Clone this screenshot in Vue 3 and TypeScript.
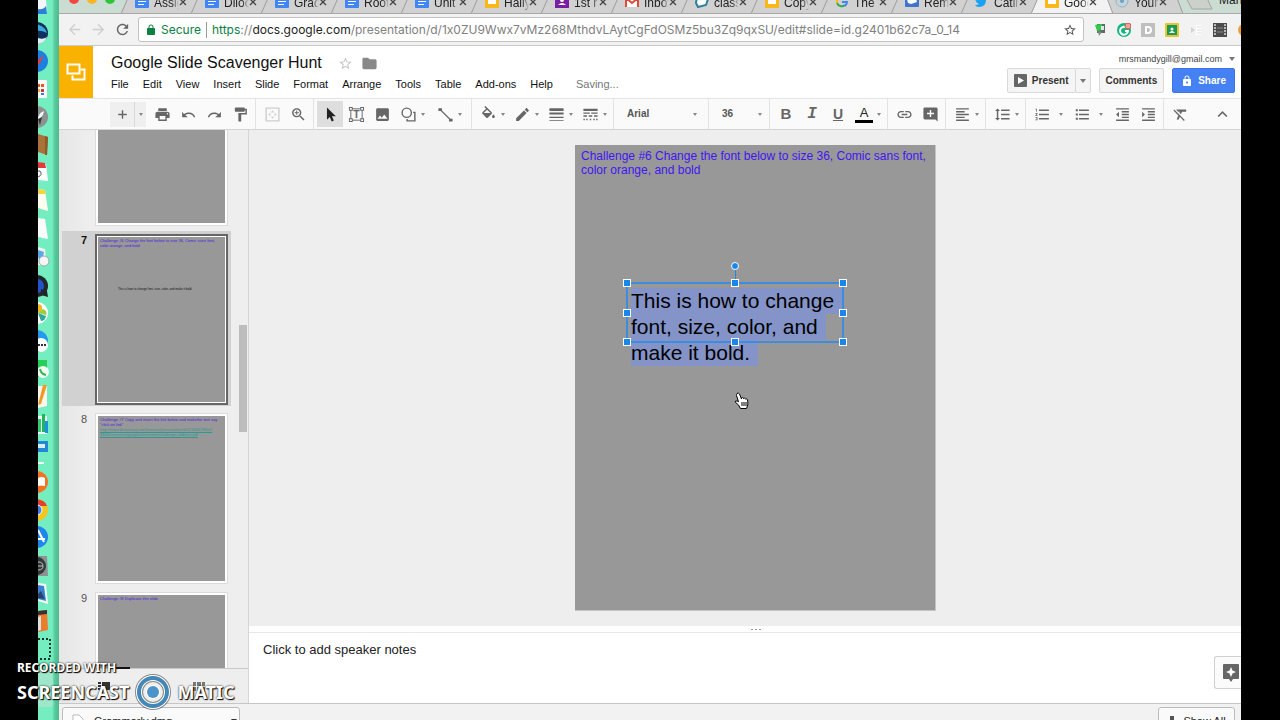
<script setup lang="ts">
import { ref } from 'vue'

type Favicon = 'docs' | 'slides' | 'people' | 'gmail' | 'class' | 'google' | 'remind' | 'twitter' | 'ring'

interface Tab {
  label: string
  icon: Favicon
  active?: boolean
}

interface Tool {
  kind: 'icon' | 'menu' | 'sep' | 'glyph'
  name?: string
  label?: string
  size?: string
}

interface Thumb {
  id: number
  title: string
  body?: string
  link?: string
}

const paths: Record<string, string> = {
  back: 'M20 11H7.83l5.59-5.59L12 4l-8 8 8 8 1.41-1.41L7.83 13H20v-2z',
  forward: 'M12 4l-1.41 1.41L16.17 11H4v2h12.17l-5.58 5.59L12 20l8-8z',
  reload: 'M17.65 6.35C16.2 4.9 14.21 4 12 4c-4.42 0-7.99 3.58-7.99 8s3.57 8 7.99 8c3.73 0 6.84-2.55 7.73-6h-2.08c-.82 2.33-3.04 4-5.65 4-3.31 0-6-2.69-6-6s2.69-6 6-6c1.66 0 3.14.69 4.22 1.78L13 11h7V4l-2.35 2.35z',
  lock: 'M18 8h-1V6c0-2.76-2.24-5-5-5S7 3.24 7 6v2H6c-1.1 0-2 .9-2 2v10c0 1.1.9 2 2 2h12c1.1 0 2-.9 2-2V10c0-1.1-.9-2-2-2zm-2.9 0H8.9V6c0-1.71 1.39-3.1 3.1-3.1 1.71 0 3.1 1.39 3.1 3.1v2z',
  shareLock: 'M18 8h-1V6c0-2.76-2.24-5-5-5S7 3.24 7 6v2H6c-1.1 0-2 .9-2 2v10c0 1.1.9 2 2 2h12c1.1 0 2-.9 2-2V10c0-1.1-.9-2-2-2zm-6 9c-1.1 0-2-.9-2-2s.9-2 2-2 2 .9 2 2-.9 2-2 2zm3.1-9H8.9V6c0-1.71 1.39-3.1 3.1-3.1 1.71 0 3.1 1.39 3.1 3.1v2z',
  star: 'M22 9.24l-7.19-.62L12 2 9.19 8.63 2 9.24l5.46 4.73L5.82 21 12 17.27 18.18 21l-1.63-7.03L22 9.24zM12 15.4l-3.76 2.27 1-4.28-3.32-2.88 4.38-.38L12 6.1l1.71 4.04 4.38.38-3.32 2.88 1 4.28L12 15.4z',
  folder: 'M10 4H4c-1.1 0-1.99.9-1.99 2L2 18c0 1.1.9 2 2 2h16c1.1 0 2-.9 2-2V8c0-1.1-.9-2-2-2h-8l-2-2z',
  plus: 'M18 13h-5v5h-2v-5H6v-2h5V6h2v5h5v2z',
  print: 'M19 8H5c-1.66 0-3 1.34-3 3v6h4v4h12v-4h4v-6c0-1.66-1.34-3-3-3zm-3 11H8v-5h8v5zm3-7c-.55 0-1-.45-1-1s.45-1 1-1 1 .45 1 1-.45 1-1 1zm-1-9H6v4h12V3z',
  undo: 'M12.5 9c-2.65 0-5.05.79-6.9 2.2L3 8v8h8l-3.620-3.200c1.390-.96 3.160-1.480 5.120-1.480 3.540 0 6.050 1.910 7.100 4.900l1.870-.58C20.380 11.630 17.150 9 12.500 9z',
  redo: 'M18.400 11.200C16.550 9.790 14.150 9 11.500 9c-4.650 0-7.880 2.630-8.960 6.640L4.400 16.220c1.050-2.990 3.560-4.900 7.100-4.900 1.950 0 3.730.52 5.120 1.480L13 16h8V8l-2.600 3.200z',
  paint: 'M18 4V3c0-.55-.45-1-1-1H5c-.55 0-1 .45-1 1v4c0 .55.45 1 1 1h12c.55 0 1-.45 1-1V6h1v4H9v11c0 .55.45 1 1 1h2c.55 0 1-.45 1-1v-9h8V4h-3z',
  fit: 'M2 2h20v20H2zM4 4v16h16V4zM12 6l2.500 3h-5zM12 18l2.500-3h-5zM6 12l3-2.500v5zM18 12l-3-2.500v5z',
  zoom: 'M15.5 14h-.79l-.28-.27C15.41 12.59 16 11.11 16 9.5 16 5.91 13.09 3 9.5 3S3 5.91 3 9.5 5.91 16 9.5 16c1.61 0 3.09-.59 4.23-1.57l.27.28v.79l5 4.99L20.49 19l-4.99-5zm-6 0C7.01 14 5 11.99 5 9.5S7.01 5 9.5 5 14 7.01 14 9.5 11.99 14 9.5 14zM12.500 10.200h-2.300v2.300H8.800v-2.300H6.500V8.800h2.300V6.500h1.400v2.300h2.300z',
  select: 'M7 2v17.500l4-3.900 2.700 6.200 3-1.300-2.700-6.100H19.500z',
  image: 'M21 19V5c0-1.1-.9-2-2-2H5c-1.1 0-2 .9-2 2v14c0 1.1.9 2 2 2h14c1.1 0 2-.9 2-2zM8.500 13.500l2.500 3.010L14.500 12l4.500 6H5l3.500-4.500z',
  shape: 'M9.500 2a7.500 7.500 0 1 0 0 15 7.500 7.500 0 0 0 0-15zm0 2a5.500 5.500 0 1 1 0 11 5.500 5.500 0 0 1 0-11zM18.500 8H22v14H9v-3.500h2V20h9V10h-1.500z',
  line: 'M2 3h5v3.200L18.800 18H22v4h-5v-3.200L5.200 7H2z',
  fill: 'M16.56 8.94L7.62 0 6.21 1.41l2.38 2.38-5.15 5.15c-.59.59-.59 1.54 0 2.12l5.5 5.5c.29.29.68.44 1.06.44s.77-.15 1.06-.44l5.5-5.5c.59-.58.59-1.53 0-2.12zM5.21 10L10 5.21 14.790 10H5.210zM19 11.500s-2 2.170-2 3.500c0 1.100.9 2 2 2s2-.9 2-2c0-1.330-2-3.500-2-3.500z',
  pencil: 'M3 17.25V21h3.75L17.81 9.94l-3.75-3.75L3 17.25zM20.71 7.04c.39-.39.39-1.02 0-1.41l-2.34-2.34c-.39-.39-1.02-.39-1.41 0l-1.83 1.83 3.75 3.75 1.83-1.83z',
  weight: 'M2 17h20v-2H2v2zm0 4h20v-1H2v1zm0-9h20V9H2v3zm0-9v4h20V3H2z',
  dash: 'M2 15h5v-2H2v2zm7.500 0h5v-2h-5v2zm7.500 0h5v-2h-5v2zM2 20h2v-2H2v2zm4 0h2v-2H6v2zm5 0h2v-2h-2v2zm5 0h2v-2h-2v2zm4 0h2v-2h-2v2zM2 11h9V9H2v2zm11 0h9V9h-9v2zM2 4v3h20V4H2z',
  link: 'M3.900 12c0-1.710 1.390-3.100 3.100-3.100h4V7H7c-2.760 0-5 2.240-5 5s2.240 5 5 5h4v-1.900H7c-1.710 0-3.100-1.390-3.100-3.100zM8 13h8v-2H8v2zm9-6h-4v1.900h4c1.710 0 3.100 1.390 3.100 3.100s-1.390 3.100-3.100 3.100h-4V17h4c2.760 0 5-2.240 5-5s-2.240-5-5-5z',
  comment: 'M22 4c0-1.100-.9-2-2-2H4c-1.100 0-2 .9-2 2v13c0 1.100.9 2 2 2h15l3 3V4zM17 11.500h-4v4h-2v-4H7v-2h4v-4h2v4h4z',
  align: 'M15 15H3v2h12v-2zm0-8H3v2h12V7zM3 13h18v-2H3v2zm0 8h18v-2H3v2zM3 3v2h18V3H3z',
  spacing: 'M6 7h2.500L5 3.500 1.500 7H4v10H1.500L5 20.500 8.500 17H6V7zm4-2v2h12V5H10zm0 14h12v-2H10v2zm0-6h12v-2H10v2z',
  numbered: 'M2 17h2v.5H3v1h1v.5H2v1h3v-4H2v1zm1-9h1V4H2v1h1v3zm-1 3h1.800L2 13.100v.9h3v-1H3.200L5 10.900V10H2v1zm5-6v2h14V5H7zm0 14h14v-2H7v2zm0-6h14v-2H7v2z',
  bullets: 'M2.500 4.500h3v3h-3zM2.500 10.500h3v3h-3zM2.500 16.500h3v3h-3zM7 19h14v-2H7v2zm0-6h14v-2H7v2zm0-8v2h14V5H7z',
  outdent: 'M11 17h10v-2H11v2zm-8-5l4 4V8l-4 4zm0 9h18v-2H3v2zM3 3v2h18V3H3zm8 6h10V7H11v2zm0 4h10v-2H11v2z',
  indent: 'M3 21h18v-2H3v2zM3 8v8l4-4-4-4zm8 9h10v-2H11v2zM3 3v2h18V3H3zm8 6h10V7H11v2zm0 4h10v-2H11v2z',
  clear: 'M3.270 5L2 6.270l6.970 6.970L6.500 19h3l1.570-3.660L16.730 21 18 19.730 3.550 5.270 3.270 5zM6 5v.18L8.820 8h2.400l-.72 1.680 2.100 2.100L14.210 8H20V5H6z',
  collapse: 'M12 7l-7 7 1.700 1.700L12 10.400l5.300 5.300L19 14z',
}

const tabs: Tab[] = [
  { label: 'Assig', icon: 'docs' },
  { label: 'Diloc', icon: 'docs' },
  { label: 'Grad', icon: 'docs' },
  { label: 'Root', icon: 'docs' },
  { label: 'Unit', icon: 'docs' },
  { label: 'Hally', icon: 'slides' },
  { label: '1st r', icon: 'people' },
  { label: 'Inbox', icon: 'gmail' },
  { label: 'class', icon: 'class' },
  { label: 'Copy', icon: 'slides' },
  { label: 'The l', icon: 'google' },
  { label: 'Remi', icon: 'remind' },
  { label: 'Catlin', icon: 'twitter' },
  { label: 'Goog', icon: 'slides', active: true },
  { label: 'Your', icon: 'ring' },
]

const menus = ['File', 'Edit', 'View', 'Insert', 'Slide', 'Format', 'Arrange', 'Tools', 'Table', 'Add-ons', 'Help']

const leadTools: Tool[] = [
  { kind: 'icon', name: 'print', label: 'Print' },
  { kind: 'icon', name: 'undo', label: 'Undo' },
  { kind: 'icon', name: 'redo', label: 'Redo' },
  { kind: 'icon', name: 'paint', label: 'Paint format' },
  { kind: 'sep' },
  { kind: 'icon', name: 'fit', label: 'Zoom to fit', size: 'faint' },
  { kind: 'icon', name: 'zoom', label: 'Zoom' },
  { kind: 'sep' },
  { kind: 'icon', name: 'select', label: 'Select', size: 'pressed' },
  { kind: 'icon', name: 'textbox', label: 'Text box' },
  { kind: 'icon', name: 'image', label: 'Image' },
  { kind: 'menu', name: 'shape', label: 'Shape', size: 'mid' },
  { kind: 'menu', name: 'line', label: 'Line', size: 'mid' },
  { kind: 'sep' },
  { kind: 'menu', name: 'fill', label: 'Fill color' },
  { kind: 'menu', name: 'pencil', label: 'Line color' },
  { kind: 'menu', name: 'weight', label: 'Line weight' },
  { kind: 'menu', name: 'dash', label: 'Line dash' },
  { kind: 'sep' },
]

const textTools: Tool[] = [
  { kind: 'sep' },
  { kind: 'glyph', name: 'B', label: 'Bold', size: 'bold' },
  { kind: 'glyph', name: 'I', label: 'Italic', size: 'italic' },
  { kind: 'glyph', name: 'U', label: 'Underline', size: 'under' },
  { kind: 'menu', name: 'color', label: 'Text color' },
  { kind: 'sep' },
  { kind: 'icon', name: 'link', label: 'Insert link' },
  { kind: 'icon', name: 'comment', label: 'Add comment' },
  { kind: 'sep' },
  { kind: 'menu', name: 'align', label: 'Align' },
  { kind: 'sep' },
  { kind: 'menu', name: 'spacing', label: 'Line spacing' },
  { kind: 'sep' },
  { kind: 'menu', name: 'numbered', label: 'Numbered list', size: 'wide' },
  { kind: 'menu', name: 'bullets', label: 'Bulleted list', size: 'wide' },
  { kind: 'icon', name: 'outdent', label: 'Decrease indent' },
  { kind: 'icon', name: 'indent', label: 'Increase indent' },
  { kind: 'sep' },
  { kind: 'icon', name: 'clear', label: 'Clear formatting' },
]

const thumbs: Thumb[] = [
  { id: 6, title: '' },
  {
    id: 7,
    title: 'Challenge #6 Change the font below to size 36, Comic sans font, color orange, and bold',
    body: 'This is how to change font, size, color, and make it bold.',
  },
  {
    id: 8,
    title: 'Challenge #7 Copy and insert the link below and makethe text say "click on link"',
    link: 'http://www.dictionary.com/browse/presentation/d/1234567890/2 1826/resource/google/classroom/challenge-slides/u.pdf',
  },
  { id: 9, title: 'Challenge #8 Duplicate this slide' },
]

const bodyLines = ['This is how to change', 'font, size, color, and', 'make it bold.']
const current = ref(7)
const font = ref('Arial')
const size = ref('36')
const notes = ref('')
const handles = ['nw', 'n', 'ne', 'w', 'e', 'sw', 's', 'se']
</script>

<template>
  <div class="desktop">
    <aside class="dock" aria-label="Dock">
      <svg class="dock-art" width="21" height="720" viewBox="0 0 21 720" aria-hidden="true">
        <path d="M0 0h8l1 14H0z" fill="#f3f6fa" /><path d="M0 9q5 1 8-3l1 8H0z" fill="#2b7fd6" />
        <circle cx="-1" cy="33" r="11" fill="#10305e" /><path d="M-2 24q9 2 11 9-6-3-11-2z" fill="#3ea9d8" /><path d="M0 38q5 2 9-1-2 6-9 7z" fill="#dfeff2" />
        <circle cx="-1" cy="61" r="11" fill="#1d7fe0" /><path d="M0 60l6-5-4 8-2 2z" fill="#e33d3d" />
        <rect x="-12" y="80" width="21" height="18" rx="1" fill="#fbfbfb" /><path d="M0 84h2v3H0zM3 84h3v3H3z" fill="#e2572b" /><path d="M0 89h2v3H0z" fill="#f0b530" /><path d="M3 89h3v3H3z" fill="#c43b3b" /><path d="M3 93h3v2H3z" fill="#3a7de0" />
        <circle cx="-1" cy="117" r="11" fill="#8b9291" /><path d="M0 118q1-5 6-7-1 6-6 9z" fill="#fff" /><path d="M0 119l4-2-2 8z" fill="#30383a" />
        <path d="M0 134l10 3-1 18-9-3z" fill="#a9723a" /><path d="M7 136l3 1-1 18H7z" fill="#8d5b2a" />
        <path d="M0 162l8 2 2 17-10-1z" fill="#fff" /><path d="M0 162l7 1 1 5H0z" fill="#e23b3b" /><path d="M0 171h2q3 4-2 6" fill="none" stroke="#555" />
        <path d="M0 189l7 1 3 21-10-3z" fill="#fffdf0" /><path d="M0 189l7 1 1 4H0z" fill="#f4d540" />
        <path d="M0 218l7 1 3 20-10-2z" fill="#fbfbfb" />
        <path d="M0 247l7 2 2 17-9-1z" fill="#eef3ea" /><path d="M0 250l6 2-2 9-4-3z" fill="#5aa6ea" /><circle cx="6" cy="261" r="5" fill="#f5f5f5" stroke="#9aa" />
        <circle cx="-1" cy="286" r="11" fill="#23262b" /><circle cx="-1" cy="286" r="7" fill="#2056c8" /><path d="M3 289l6 2 1 6-7-2z" fill="#22262b" />
        <circle cx="-1" cy="313" r="11" fill="#fff" /><path d="M0 304q5 0 4 6l-4 3z" fill="#f3b522" /><path d="M0 313l5-4q5 2 3 6z" fill="#9ccc3c" /><path d="M0 313l8 3q-1 5-5 5z" fill="#2fa89a" />
        <circle cx="-1" cy="341" r="11" fill="#2699ee" /><circle cx="3" cy="345" r="7" fill="#fff" /><path d="M0 344h2v2H0zM3 344h2v2H3zM6 344h2v2H6z" fill="#333" />
        <path d="M0 360h9v17H0z" fill="#27cf56" /><circle cx="5" cy="372" r="6" fill="#f5fff5" /><path d="M2 369q1 5 6 6" stroke="#2fb653" stroke-width="2" fill="none" />
        <path d="M0 386h9v20l-9 2z" fill="#fbf7ef" /><path d="M9 385l-6 19-3 1 5-20z" fill="#f19a23" />
        <path d="M0 416h9v18H0z" fill="#eef6f8" /><path d="M0 419h3v13H0z" fill="#2fce68" /><path d="M4 414h3v18H4z" fill="#22b45b" /><path d="M7 421h3v12H7z" fill="#1e8ee8" />
        <path d="M0 441h10v11H0z" fill="#2387d6" /><path d="M0 444h7v4H0z" fill="#d8eefa" />
        <path d="M0 463h6" stroke="#e9fff6" stroke-width="2" />
        <circle cx="-1" cy="482" r="11" fill="#f27422" /><path d="M0 478q4-2 7 0v8q-4-1-7 0z" fill="#fff" />
        <circle cx="-1" cy="510" r="11" fill="#f4c51e" /><path d="M-1 499q8 1 10 7H-1z" fill="#e23f33" /><circle cx="-1" cy="510" r="5" fill="#3e7fe8" stroke="#fff" />
        <circle cx="-1" cy="537" r="11" fill="#1f86ec" /><path d="M0 530l6 12M0 539h7" stroke="#fff" stroke-width="2" />
        <path d="M0 556h9l1 20H0z" fill="#8d9191" /><circle cx="-1" cy="566" r="9" fill="#333838" /><path d="M0 562q5 0 5 4t-5 4M0 566h5" stroke="#b9bdbd" fill="none" />
        <path d="M0 583l8 1 2 20-10-3z" fill="#f5f9fc" /><path d="M0 585l6 1 2 15-8-2z" fill="#3a7fd0" /><path d="M0 594l3-3 4 8-7-1z" fill="#26456c" />
        <path d="M0 611l9-1 1 20-10 2z" fill="#ec7b2c" /><path d="M0 611l9-1v4l-9 1z" fill="#343434" /><path d="M0 617l3-1v14l-3 1z" fill="#d9e4e2" />
        <path d="M0 639h12v20H0" fill="none" stroke="#16352b" stroke-width="2" stroke-dasharray="2 2" />
        <path d="M0 670h15v34q0 3-3 3H0z" fill="#c9dfd6" opacity=".5" />
      </svg>
    </aside>

    <main class="window">
      <div class="tabs">
        <div class="lights" aria-hidden="true"><i class="red"></i><i class="amber"></i><i class="green"></i></div>
        <div v-for="t in tabs" :key="t.label" class="tab" :class="{ active: t.active }">
          <svg class="tab-edge" viewBox="0 0 82 14" width="82" height="14" aria-hidden="true">
            <path class="tab-fill" d="M0 14L7 -2H76L82 14z" />
            <path class="tab-line" d="M0 14L7 -2M76 -2L82 14" />
          </svg>
          <svg class="favicon" viewBox="0 0 14 14" width="14" height="14" aria-hidden="true">
            <template v-if="t.icon === 'docs'"><rect width="14" height="14" rx="1" fill="#4285f4" /><path d="M3 4h8v2H3zM3 7h8v1H3zM3 10h6v1H3z" fill="#fff" /></template>
            <template v-else-if="t.icon === 'slides'"><rect width="14" height="14" rx="1" fill="#f8b71b" /><path d="M3 4h8v6H3z" fill="#fff" /></template>
            <template v-else-if="t.icon === 'people'"><rect width="14" height="14" fill="#7b1fa2" /><circle cx="7" cy="6" r="2" fill="#fff" /><path d="M3 11q4-4 8 0z" fill="#fff" /></template>
            <template v-else-if="t.icon === 'gmail'"><rect y="2" width="14" height="11" fill="#fff" /><path d="M1 13V4l6 5 6-5v9" fill="none" stroke="#dd4b39" stroke-width="2" /></template>
            <template v-else-if="t.icon === 'class'"><path d="M2 2l11 3-2 6-8 2-2-4z" fill="#fff" stroke="#2d7f9f" stroke-width="2" /></template>
            <template v-else-if="t.icon === 'google'"><path d="M2 6a5 5 0 0 1 9-2" fill="none" stroke="#ea4335" stroke-width="2" /><path d="M2 6v3" stroke="#fbbc05" stroke-width="2" /><path d="M2 9a5 5 0 0 0 8 2" fill="none" stroke="#34a853" stroke-width="2" /><path d="M7 8h5q0 2-2 4" fill="none" stroke="#4285f4" stroke-width="2" /></template>
            <template v-else-if="t.icon === 'remind'"><rect width="14" height="13" rx="1" fill="#3f74d1" /><path d="M2 5l5-3 4 2 1 4-6 2-3-1z" fill="#fff" /></template>
            <template v-else-if="t.icon === 'twitter'"><path d="M0 11q3 0 4-1-3-1-3-3Q-1 5 0 2q3 3 6 3 0-4 4-3l3 1-2 3q0 7-7 7-3 0-4-2z" fill="#1da1f2" /></template>
            <template v-else><circle cx="7" cy="7" r="6" fill="none" stroke="#7fb8de" /><circle cx="7" cy="7" r="2" fill="#5fa5d5" /></template>
          </svg>
          <span class="tab-label">{{ t.label }}</span>
          <button class="tab-close" :aria-label="'Close ' + t.label">
            <svg viewBox="0 0 8 8" width="8" height="8"><path d="M1 1l6 6M7 1L1 7" stroke="#444" stroke-width="1.300" /></svg>
          </button>
        </div>
        <svg class="new-tab" viewBox="0 0 28 14" width="28" height="14" aria-hidden="true"><path d="M1 -2L7 9H27L22 -2z" fill="#ccd1cc" stroke="#a2a6a3" /></svg>
        <span class="profile">Mandy</span>
      </div>

      <div class="address-row">
        <button class="nav dim" aria-label="Back"><svg viewBox="0 0 24 24"><path :d="paths.back" /></svg></button>
        <button class="nav dim" aria-label="Forward"><svg viewBox="0 0 24 24"><path :d="paths.forward" /></svg></button>
        <button class="nav" aria-label="Reload"><svg viewBox="0 0 24 24"><path :d="paths.reload" /></svg></button>
        <div class="omnibox">
          <svg class="url-lock" viewBox="0 0 24 24"><path :d="paths.lock" /></svg>
          <span class="secure">Secure</span>
          <span class="url"><b>https</b>://<em>docs.google.com</em>/presentation/d/1x0ZU9Wwx7vMz268MthdvLAytCgFdOSMz5bu3Zq9qxSU/edit#slide=id.g2401b62c7a_0_14</span>
          <button class="bookmark" aria-label="Bookmark"><svg viewBox="0 0 24 24"><path :d="paths.star" /></svg></button>
        </div>
        <div class="extensions" aria-hidden="true">
          <svg viewBox="0 0 14 14"><path d="M4 1h8v9H4z" fill="#5b6b68" /><path d="M2 2l7-1v6l-5 1z" fill="#35c94a" /><path d="M5 8l4 1-3 4z" fill="#7d8885" /><path d="M8 3h3v4H8z" fill="#dfe6e2" /></svg>
          <svg viewBox="0 0 14 14"><circle cx="7" cy="7" r="7" fill="#15b67d" /><path d="M10 5a4 4 0 1 0 1 3H8" fill="none" stroke="#fff" stroke-width="2" /><circle cx="11" cy="3" r="3" fill="#e9a39b" stroke="#d55" /></svg>
          <svg viewBox="0 0 14 14"><rect width="14" height="14" fill="#bfbfbf" /><path d="M5 4h2a3 3 0 0 1 0 6H5z" fill="none" stroke="#fff" stroke-width="2" /></svg>
          <svg viewBox="0 0 14 14"><rect width="14" height="14" rx="1" fill="#e6c62e" /><rect x="2" y="2" width="10" height="10" fill="#1c9a55" /><circle cx="7" cy="6" r="1.500" fill="#fff" /><path d="M4 10q3-4 6 0z" fill="#fff" /></svg>
          <svg viewBox="0 0 14 14"><path d="M2 4v6l4-3z" fill="#d3d3d3" /><path d="M7 2h5v10H7z" fill="#fff" /><path d="M8 4h4M8 7h4M8 10h4" stroke="#dcdcdc" /></svg>
          <svg viewBox="0 0 14 14"><rect width="14" height="14" fill="#4c4c4c" /><path d="M2 1v12M12 1v12" stroke="#ddd" stroke-width="1.500" stroke-dasharray="2 1" /><path d="M4 5h6M4 9h6" stroke="#888" /></svg>
          <svg viewBox="0 0 14 14"><circle cx="7" cy="7" r="6" fill="#f0a033" /></svg>
        </div>
      </div>

      <header class="app-header">
        <a class="logo" href="#" aria-label="Slides home">
          <svg viewBox="0 0 20 18" width="20" height="18"><path d="M6.500 12.500v4h12V6.500h-4" fill="none" stroke="#fff" stroke-width="2" /><rect x="1.500" y="1.500" width="12" height="9" fill="none" stroke="#fff" stroke-width="2" /></svg>
        </a>
        <div class="title-block">
          <div class="title-row">
            <h1>Google Slide Scavenger Hunt</h1>
            <button class="plain star" aria-label="Star"><svg viewBox="0 0 24 24"><path :d="paths.star" /></svg></button>
            <button class="plain folder" aria-label="Move to folder"><svg viewBox="0 0 24 24"><path :d="paths.folder" /></svg></button>
          </div>
          <nav class="menu-bar">
            <button v-for="m in menus" :key="m" class="plain">{{ m }}</button>
            <span class="saving">Saving...</span>
          </nav>
        </div>
        <div class="account">
          <button class="plain email">mrsmandygill@gmail.com <i class="caret big"></i></button>
          <div class="actions">
            <div class="split">
              <button class="action present">
                <svg viewBox="0 0 13 13" width="13" height="13"><rect width="13" height="13" rx="1" fill="#666" /><path d="M4 3l6 3.500-6 3.500z" fill="#fff" /></svg>Present
              </button>
              <button class="action arrow" aria-label="Present options"><i class="caret big"></i></button>
            </div>
            <button class="action">Comments</button>
            <button class="action share"><svg viewBox="0 0 24 24" width="12" height="12"><path :d="paths.shareLock" /></svg>Share</button>
          </div>
        </div>
      </header>

      <div class="toolbar" role="toolbar" aria-label="Editing tools">
        <button class="new-slide" aria-label="New slide"><svg viewBox="0 0 24 24"><path :d="paths.plus" /></svg></button>
        <button class="new-arrow" aria-label="New slide layout"><i class="caret"></i></button>
        <template v-for="(t, i) in leadTools" :key="i">
          <i v-if="t.kind === 'sep'" class="sep"></i>
          <button v-else class="tool" :class="[t.kind, t.size]" :aria-label="t.label">
            <span class="ico">
              <svg v-if="t.name === 'textbox'" viewBox="0 0 18 18">
                <path d="M3 3h12v12H3z" fill="none" stroke="#666" /><path d="M1 1h4v4H1zM13 1h4v4h-4zM1 13h4v4H1zM13 13h4v4h-4z" fill="#666" /><path d="M2 2h2v2H2zM14 2h2v2h-2zM2 14h2v2H2zM14 14h2v2h-2z" fill="#fff" />
                <text x="9" y="13" text-anchor="middle" class="box-letter">T</text>
              </svg>
              <svg v-else viewBox="0 0 24 24"><path :d="paths[t.name!]" fill-rule="evenodd" /></svg>
            </span>
            <i v-if="t.kind === 'menu'" class="caret"></i>
          </button>
        </template>
        <label class="pick family"><select v-model="font" aria-label="Font"><option>Arial</option></select><i class="caret"></i></label>
        <i class="sep"></i>
        <label class="pick points"><select v-model="size" aria-label="Font size"><option>36</option></select><i class="caret"></i></label>
        <template v-for="(t, i) in textTools" :key="i">
          <i v-if="t.kind === 'sep'" class="sep"></i>
          <button v-else class="tool" :class="[t.kind, t.size]" :aria-label="t.label">
            <span v-if="t.kind === 'glyph'" class="ico">{{ t.name }}</span>
            <span v-else-if="t.name === 'color'" class="ico ink">A</span>
            <span v-else class="ico"><svg viewBox="0 0 24 24"><path :d="paths[t.name!]" fill-rule="evenodd" /></svg></span>
            <i v-if="t.kind === 'menu'" class="caret"></i>
          </button>
        </template>
        <button class="tool icon collapse" aria-label="Hide menus"><span class="ico"><svg viewBox="0 0 24 24"><path :d="paths.collapse" /></svg></span></button>
      </div>

      <div class="workspace">
        <section class="filmstrip">
          <div class="strip">
            <ol>
              <li v-for="s in thumbs" :key="s.id" :class="{ current: s.id === current }" @click="current = s.id">
                <span class="num">{{ s.id }}</span>
                <div class="thumb">
                  <div class="thumb-page">
                    <p class="thumb-title">{{ s.title }}</p>
                    <p v-if="s.link" class="thumb-link">{{ s.link }}</p>
                    <p v-if="s.body" class="thumb-body">{{ s.body }}</p>
                  </div>
                </div>
              </li>
            </ol>
            <i class="scrollbar"></i>
          </div>
          <div class="views">
            <button class="plain" aria-label="Filmstrip view"><svg viewBox="0 0 12 9" width="12" height="9"><path d="M0 0h3v2H0zM0 3h3v2H0zM0 6h3v2H0zM4 0h8v8H4z" fill="#333" /></svg></button>
            <button class="plain" aria-label="Grid view"><svg viewBox="0 0 12 9" width="12" height="9"><path d="M0 0h3v4H0zM4 0h4v4H4zM9 0h3v4H9zM0 5h3v4H0zM4 5h4v4H4zM9 5h3v4H9z" fill="#777" /></svg></button>
          </div>
        </section>

        <section class="editor">
          <div class="canvas">
            <article class="slide">
              <p class="challenge">Challenge #6 Change the font below to size 36, Comic sans font, color orange, and bold</p>
              <div class="textbox">
                <p><mark v-for="l in bodyLines" :key="l">{{ l }}</mark></p>
                <i class="outline"></i>
                <i class="stem"></i><i class="rotate"></i>
                <i v-for="h in handles" :key="h" class="handle" :class="h"></i>
              </div>
              <svg class="pointer" viewBox="0 0 16 18" width="16" height="18" aria-hidden="true">
                <path d="M3 1.500q1.500-1 2.500.5L7.500 7V6q1-1 2 0v.5q1-1 2 .5 1.500-.7 2 .8.5 2 .3 5L12.500 16.500H6.500L4.500 13 1.200 10q0-1.700 2-1l1.300.8L2.500 3.500q-.2-1.300.5-2z" fill="#fff" stroke="#000" stroke-width="1" /><path d="M8 10v4M10 10v4M12 10v4" stroke="#000" />
              </svg>
            </article>
          </div>
          <div class="divider" aria-hidden="true"><i></i><i></i><i></i></div>
          <div class="notes">
            <textarea v-model="notes" aria-label="Speaker notes" placeholder="Click to add speaker notes"></textarea>
            <button class="explore" aria-label="Explore"><svg viewBox="0 0 16 18" width="16" height="18"><path d="M1 0h14q1 0 1 1v13q0 1-1 1h-5l-2 3-2-3H1q-1 0-1-1V1q0-1 1-1z" fill="#666" /><path d="M8 3l1.500 3.500L13 8 9.500 9.500 8 13 6.500 9.500 3 8l3.500-1.500z" fill="#fff" /></svg></button>
          </div>
        </section>
      </div>

      <footer class="downloads">
        <button class="download"><svg viewBox="0 0 12 14" width="12" height="14"><path d="M1 1h6l4 4v9H1z" fill="#fff" stroke="#bbb" /><path d="M4 6h5v3z" fill="#777" /></svg><span>Grammarly.dmg</span><i class="caret dark"></i></button>
        <button class="show-all"><svg viewBox="0 0 10 10" width="10" height="10"><path d="M3 0h4v4h3L5 9 0 4h3z" fill="#555" /></svg>Show All</button>
      </footer>
    </main>

    <div class="watermark" aria-label="Recorded with Screencast-O-Matic">
      <div class="recorded">RECORDED WITH<i></i></div>
      <div class="brand"><span>SCREENCAST</span>
        <svg viewBox="0 0 38 38" width="38" height="38"><circle cx="19" cy="19" r="14" fill="none" stroke="#222" stroke-width="8" opacity=".5" /><circle cx="19" cy="19" r="14" fill="none" stroke="#fff" stroke-width="6" /><circle cx="19" cy="19" r="14" fill="none" stroke="#4387b8" stroke-width="4" /><circle cx="19" cy="19" r="7" fill="#fff" /><circle cx="19" cy="19" r="6" fill="#4b93c9" /></svg>
        <span>MATIC</span></div>
    </div>
  </div>
</template>

<style>
html,
body {
  margin: 0;
  background: #000;
}
</style>

<style scoped>
* {
  box-sizing: border-box;
}
.desktop {
  position: relative;
  display: flex;
  height: 100vh;
  padding: 0 39px 0 38px;
  overflow: hidden;
  background: #000;
  color: #222;
  font-family: 'Liberation Sans', Arial, sans-serif;
  font-size: 11px;
}
button {
  display: flex;
  align-items: center;
  justify-content: center;
  padding: 0;
  border: 0;
  background: none;
  color: inherit;
  font: inherit;
  white-space: nowrap;
}
svg {
  display: block;
  flex: none;
}
p,
h1,
ol {
  margin: 0;
  padding: 0;
}
.dock {
  flex: none;
  width: 21px;
  overflow: hidden;
  background: linear-gradient(to right, #74eec1 0, #74eec1 14px, #56c99b 17px, #50b98f 21px);
}
.window {
  flex: 1;
  min-width: 0;
  display: flex;
  flex-direction: column;
  background: #fff;
}

/* browser chrome */
.tabs {
  flex: none;
  display: flex;
  align-items: flex-start;
  height: 14px;
  overflow: hidden;
  border-bottom: 1px solid #a8aaa8;
  background: #cbdcd2;
}
.lights {
  flex: none;
  display: flex;
  gap: 8px;
  width: 62px;
  padding-left: 10px;
}
.lights i {
  width: 10px;
  height: 10px;
  margin-top: -6px;
  border-radius: 50%;
}
.red { background: #f6453f; }
.amber { background: #f8b524; }
.green { background: #2bc53a; }
.tab {
  position: relative;
  flex: none;
  display: flex;
  align-items: flex-start;
  width: 70px;
  height: 14px;
  padding-left: 14px;
}
.tab-edge {
  position: absolute;
  top: 0;
  left: 0;
}
.tab-fill { fill: #d0d1d0; }
.tab-line { fill: none; stroke: #9c9e9c; }
.tab.active { z-index: 1; }
.tab.active .tab-fill { fill: #f2f2f2; }
.favicon,
.tab-label,
.tab-close {
  position: relative;
}
.favicon { margin-top: -6px; }
.tab-label {
  width: 25px;
  margin: -4px 0 0 5px;
  overflow: hidden;
  font-size: 12px;
  line-height: 14px;
  white-space: nowrap;
  -webkit-mask-image: linear-gradient(to right, #000 18px, transparent 25px);
  mask-image: linear-gradient(to right, #000 18px, transparent 25px);
}
.tab-close { margin-top: -2px; }
.new-tab { margin-left: 14px; }
.profile {
  margin: -7px 0 0 6px;
  font-size: 12px;
  line-height: 14px;
}
.address-row {
  flex: none;
  display: flex;
  align-items: center;
  height: 32px;
  padding-left: 3px;
  overflow: hidden;
  border-bottom: 1px solid #c9c9c9;
  background: #f2f2f2;
}
.nav {
  flex: none;
  width: 24px;
  height: 24px;
}
.nav svg {
  width: 17px;
  height: 17px;
  fill: #666;
}
.dim svg { fill: #cfcfcf; }
.omnibox {
  flex: 1;
  min-width: 0;
  display: flex;
  align-items: center;
  height: 25px;
  margin-left: 4px;
  padding: 0 6px;
  border: 1px solid #c2c2c2;
  border-radius: 3px;
  background: #fff;
  font: 12px/16px Inter, 'Noto Sans', sans-serif;
  font-feature-settings: 'calt' 0;
}
.url-lock {
  width: 12px;
  height: 12px;
  fill: #0b8043;
}
.secure {
  margin-left: 4px;
  padding-right: 5px;
  border-right: 1px solid #999;
  color: #0b8043;
}
.url {
  flex: 1;
  min-width: 0;
  margin-left: 5px;
  overflow: hidden;
  color: #808080;
  white-space: nowrap;
}
.url b { color: #0b8043; font-weight: 400; }
.url em { color: #222; font-style: normal; }
.bookmark svg { width: 14px; height: 14px; fill: #555; }
.extensions {
  flex: none;
  display: flex;
  gap: 10px;
  width: 148px;
  margin-left: 9px;
  overflow: hidden;
}
.extensions svg { width: 14px; height: 14px; }

/* application header */
.app-header {
  flex: none;
  display: flex;
  height: 52px;
}
.logo {
  flex: none;
  display: grid;
  place-items: center;
  width: 34px;
  background: #f9b200;
}
.title-block {
  flex: 1;
  min-width: 0;
  padding: 7px 0 0 18px;
}
.title-row {
  display: flex;
  align-items: center;
  height: 20px;
}
h1 {
  color: #111;
  font-size: 16px;
  font-weight: 400;
  line-height: 20px;
}
.star { margin-left: 16px; }
.star svg { width: 15px; height: 15px; fill: #c4c4c4; }
.folder { margin-left: 8px; }
.folder svg { width: 17px; height: 17px; fill: #888; }
.menu-bar {
  display: flex;
  align-items: center;
  gap: 14px;
  height: 22px;
  color: #111;
}
.saving { margin-left: 9px; color: #777; }
.account {
  display: flex;
  flex-direction: column;
  align-items: flex-end;
  gap: 3px;
  padding: 6px 6px 0 0;
}
.email {
  gap: 7px;
  height: 13px;
  color: #444;
  font-size: 9px;
}
.caret {
  flex: none;
  width: 0;
  height: 0;
  border: 2px solid transparent;
  border-top: 3px solid #888;
  border-bottom: 0;
}
.caret.big {
  border-width: 4px 3px 0;
  border-top-color: #777;
}
.caret.dark { border-width: 4px 3px 0; border-top-color: #333; }
.actions {
  display: flex;
  gap: 8px;
}
.split { display: flex; }
.action {
  gap: 5px;
  height: 25px;
  padding: 0 6px;
  border: 1px solid #d9d9d9;
  border-radius: 2px;
  background: #f5f5f5;
  color: #333;
  font-size: 10px;
  font-weight: 700;
}
.arrow { margin-left: -1px; padding: 0 4px; }
.share {
  padding: 0 8px;
  border-color: #3b75e8;
  background: #4681f4;
  color: #fff;
}
.share svg { fill: #fff; }

/* toolbar */
.toolbar {
  flex: none;
  display: flex;
  align-items: center;
  height: 32px;
  padding: 0 6px 0 51px;
  overflow: hidden;
  border-top: 1px solid #e3e3e3;
  border-bottom: 1px solid #d4d4d4;
  background: #fafafa;
}
.new-slide,
.new-arrow {
  flex: none;
  width: 24px;
  height: 25px;
  background: #efefef;
}
.new-arrow {
  width: 12px;
  margin-right: 3px;
  border-left: 1px solid #d8d8d8;
}
.new-slide svg,
.ico svg {
  width: 17px;
  height: 17px;
  fill: #666;
}
.tool {
  flex: none;
  justify-content: flex-start;
  width: 26px;
  height: 26px;
}
.menu { width: 34px; }
.menu.mid { width: 37px; }
.menu.wide { width: 40px; }
.menu.wide .caret { margin-left: 4px; }
.ico {
  flex: none;
  display: grid;
  place-items: center;
  width: 26px;
  color: #666;
  font-size: 15px;
  line-height: 18px;
}
.faint svg { fill: #cecece; }
.pressed { background: #dedede; }
.pressed .ico svg { fill: #222; }
.bold { font-weight: 700; }
.italic .ico { font-family: 'Liberation Mono', monospace; font-style: italic; font-weight: 700; font-size: 16px; }
.under .ico { text-decoration: underline; font-weight: 700; font-size: 14px; }
.box-letter { fill: #666; font: 700 11px 'Liberation Sans', sans-serif; }
.ico.ink {
  width: 18px;
  height: 18px;
  margin: 0 4px;
  border-bottom: 3px solid #000;
  color: #222;
  font-size: 13px;
  line-height: 14px;
}
.sep {
  flex: none;
  width: 1px;
  height: 30px;
  margin: 0 3px 0 2px;
  background: #e2e2e2;
}
.pick {
  flex: none;
  display: flex;
  align-items: center;
  width: 89px;
  padding: 0 9px 0 10px;
}
.points { width: 55px; padding-right: 5px; }
.pick select {
  flex: 1;
  min-width: 0;
  padding: 0;
  border: 0;
  appearance: none;
  background: none;
  color: #555;
  font: 700 10px/14px 'Liberation Sans', sans-serif;
}
.collapse { margin-left: auto; }

/* workspace */
.workspace {
  flex: 1;
  min-height: 0;
  display: flex;
}
.filmstrip {
  flex: none;
  display: flex;
  flex-direction: column;
  width: 190px;
  border-right: 1px solid #d5d5d5;
  background: linear-gradient(to right, #e6e6e6, #eee 30px);
}
.strip {
  position: relative;
  flex: 1;
  min-height: 0;
  overflow: hidden;
}
ol {
  display: flex;
  flex-direction: column;
  gap: 4px;
  margin: -78px 17px 0 3px;
  list-style: none;
}
li {
  display: grid;
  grid-template-columns: 25px 133px;
  gap: 8px;
  height: 175px;
  padding-top: 3px;
}
.num {
  color: #555;
  font-size: 11px;
  line-height: 12px;
  text-align: right;
}
.current { background: #d2d1d1; }
.current .num { color: #111; font-weight: 700; }
.thumb {
  height: 171px;
  padding: 2px;
  border: 1px solid #dcdcdc;
  background: #fff;
}
.current .thumb { padding: 1px; border: 2px solid #666; }
.thumb-page {
  height: 100%;
  overflow: hidden;
  padding: 1px 2px 0;
  background: #989898;
  font-size: 4px;
  line-height: 5px;
}
.thumb-title { color: #4a18e0; }
.thumb-link { color: #2a9a92; text-decoration: underline; }
.thumb-body {
  margin: 39px 0 0 18px;
  color: #111;
  font-size: 3px;
}
.scrollbar {
  position: absolute;
  top: 195px;
  right: 1px;
  width: 8px;
  height: 107px;
  background: #bdbdbd;
}
.views {
  flex: none;
  display: flex;
  gap: 83px;
  align-items: center;
  height: 35px;
  padding-left: 39px;
  border-top: 1px solid #c8c8c8;
}
.editor {
  flex: 1;
  min-width: 0;
  display: flex;
  flex-direction: column;
}
.canvas {
  flex: 1;
  min-height: 0;
  display: flex;
  justify-content: center;
  padding: 15px 0 0 21px;
  overflow: hidden;
  background: #eee;
}
.slide {
  position: relative;
  width: 361px;
  height: 466px;
  padding: 4px 4px 0 6px;
  border: 1px solid #c4c4c4;
  border-width: 0 1px 1px 0;
  background: #989898;
}
.challenge {
  color: #4216f0;
  font-size: 12px;
  line-height: 14px;
}
.textbox {
  position: absolute;
  top: 138px;
  left: 52px;
  width: 216px;
  height: 59px;
  padding: 5px 4px;
}
.textbox p {
  font-size: 21px;
  line-height: 26px;
  white-space: nowrap;
}
.textbox mark {
  display: block;
  width: fit-content;
  padding-right: 8px;
  background: #8594c8;
  color: #000;
}
.outline {
  position: absolute;
  inset: -1px;
  border: 2px solid #3c8de0;
}
.handle {
  position: absolute;
  width: 8px;
  height: 8px;
  margin: -4px;
  border: 1px solid #fff;
  background: #1a86e8;
}
.nw, .n, .ne { top: 0; }
.w, .e { top: 50%; }
.sw, .s, .se { top: 100%; }
.nw, .w, .sw { left: 0; }
.n, .s { left: 50%; }
.ne, .e, .se { left: 100%; }
.stem {
  position: absolute;
  top: -14px;
  left: 50%;
  width: 1px;
  height: 12px;
  background: #1e88e5;
}
.rotate {
  position: absolute;
  top: -21px;
  left: 50%;
  width: 8px;
  height: 8px;
  margin-left: -4px;
  border: 1px solid #fff;
  border-radius: 50%;
  background: #1a86e8;
}
.pointer {
  position: absolute;
  top: 247px;
  left: 159px;
}
.divider {
  flex: none;
  display: flex;
  align-items: center;
  justify-content: center;
  gap: 2px;
  height: 7px;
  padding-left: 21px;
  border-bottom: 1px solid #e8e8e8;
  background: #fff;
}
.divider i { width: 2px; height: 1px; background: #999; }
.notes {
  position: relative;
  flex: none;
  display: flex;
  height: 70px;
}
.notes textarea {
  flex: 1;
  padding: 9px 14px;
  border: 0;
  outline: 0;
  resize: none;
  background: #fff;
  color: #222;
  font: 13px/16px 'Liberation Sans', sans-serif;
}
.notes textarea::placeholder { color: #222; opacity: 1; }
.explore {
  position: absolute;
  top: 23px;
  right: 0;
  width: 27px;
  height: 33px;
  padding-left: 5px;
  border: 1px solid #d0d0d0;
  border-right: 0;
  border-radius: 3px 0 0 3px;
  background: #fbfbfb;
}
.downloads {
  flex: none;
  display: flex;
  justify-content: space-between;
  height: 17px;
  padding: 3px 6px 0 3px;
  overflow: hidden;
  border-top: 1px solid #c6c6c6;
  background: #f2f2f2;
}
.download,
.show-all {
  height: 27px;
  border: 1px solid #bcbcbc;
  border-radius: 3px;
  background: #fafafa;
  font-size: 11px;
}
.download {
  width: 178px;
  padding: 0 2px 0 9px;
}
.download span { flex: 1; padding-left: 10px; text-align: left; }
.show-all { gap: 6px; width: 77px; }

/* recorder watermark */
.watermark {
  position: absolute;
  bottom: 11px;
  left: 17px;
  color: #fff;
  font-family: 'Noto Sans', sans-serif;
  font-weight: 700;
  text-shadow: 1px 1px 1px #000, 0 0 2px #000;
  pointer-events: none;
}
.recorded {
  display: flex;
  align-items: center;
  font-size: 12px;
  line-height: 14px;
}
.recorded i { width: 14px; height: 2px; background: #111; }
.brand {
  display: flex;
  align-items: center;
  gap: 5px;
  height: 34px;
  font-size: 18px;
}
</style>
